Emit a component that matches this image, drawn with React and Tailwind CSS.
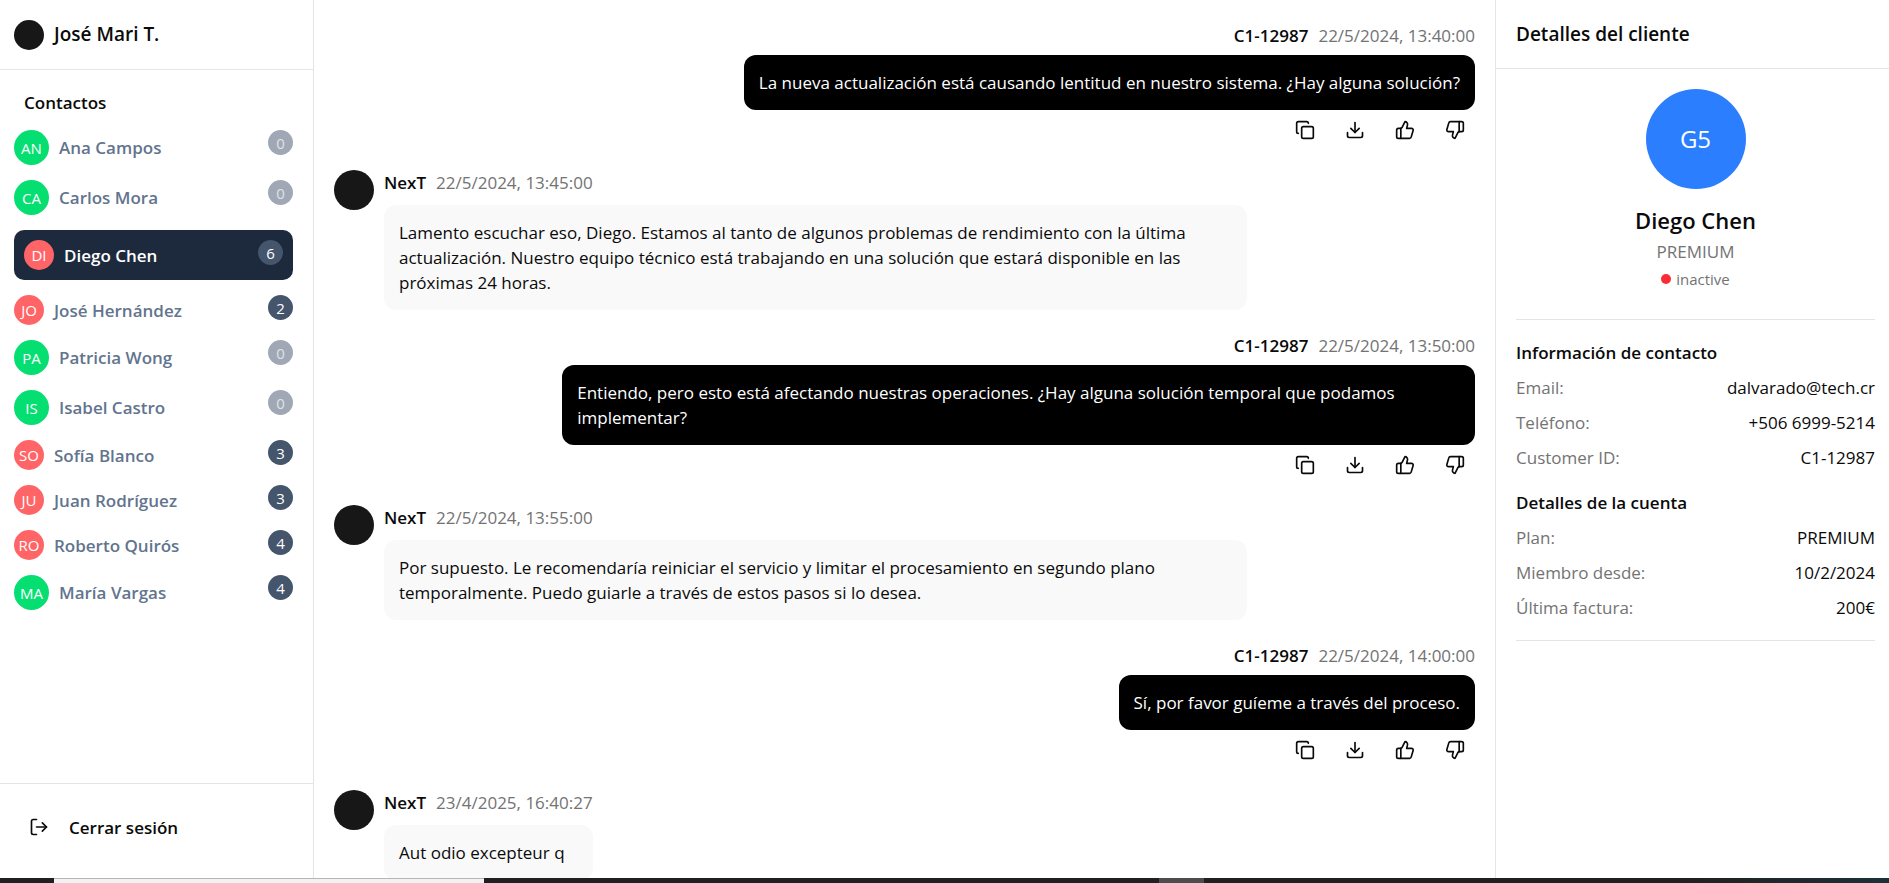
import { Copy, Download, ThumbsUp, ThumbsDown, LogOut } from 'lucide-react'

const contacts = [
  { name: 'Ana Campos', count: 0, online: true },
  { name: 'Carlos Mora', count: 0, online: true },
  { name: 'Diego Chen', count: 6, online: false, selected: true },
  { name: 'José Hernández', count: 2, online: false },
  { name: 'Patricia Wong', count: 0, online: true },
  { name: 'Isabel Castro', count: 0, online: true },
  { name: 'Sofía Blanco', count: 3, online: false },
  { name: 'Juan Rodríguez', count: 3, online: false },
  { name: 'Roberto Quirós', count: 4, online: false },
  { name: 'María Vargas', count: 4, online: true },
]

const messages = [
  { from: 'user', time: '22/5/2024, 13:40:00', text: 'La nueva actualización está causando lentitud en nuestro sistema. ¿Hay alguna solución?' },
  { from: 'bot', time: '22/5/2024, 13:45:00', text: 'Lamento escuchar eso, Diego. Estamos al tanto de algunos problemas de rendimiento con la última actualización. Nuestro equipo técnico está trabajando en una solución que estará disponible en las próximas 24 horas.' },
  { from: 'user', time: '22/5/2024, 13:50:00', text: 'Entiendo, pero esto está afectando nuestras operaciones. ¿Hay alguna solución temporal que podamos implementar?' },
  { from: 'bot', time: '22/5/2024, 13:55:00', text: 'Por supuesto. Le recomendaría reiniciar el servicio y limitar el procesamiento en segundo plano temporalmente. Puedo guiarle a través de estos pasos si lo desea.' },
  { from: 'user', time: '22/5/2024, 14:00:00', text: 'Sí, por favor guíeme a través del proceso.' },
  { from: 'bot', time: '23/4/2025, 16:40:27', text: 'Aut odio excepteur q' },
]

const actions = [
  { label: 'Copiar', Icon: Copy },
  { label: 'Descargar', Icon: Download },
  { label: 'Me gusta', Icon: ThumbsUp },
  { label: 'No me gusta', Icon: ThumbsDown },
]

function Contact({ name, count, online, selected }) {
  return (
    <li>
      <button
        type="button"
        className={`flex w-full items-center text-left ${selected ? 'rounded-[10px] bg-[#1d293d] p-[10px] text-white' : 'text-[#62748e]'}`}
      >
        <span
          className={`flex shrink-0 items-center justify-center rounded-full text-[15px] leading-5 text-white ${online ? 'size-[35px] bg-[#05df72]' : 'size-[30px] bg-[#ff6467]'}`}
        >
          {name.slice(0, 2).toUpperCase()}
        </span>
        <span className="ml-[10px] flex-1 text-[17px] leading-[25px] font-semibold">{name}</span>
        <span
          className={`flex size-[25px] items-center justify-center self-start rounded-full text-[15px] leading-5 ${count ? 'bg-[#45556c] text-white' : 'bg-[#a1a8b5] text-[#dfe2e7]'}`}
        >
          {count}
        </span>
      </button>
    </li>
  )
}

function UserMessage({ time, text }) {
  return (
    <article className="flex max-w-4/5 flex-col items-end self-end">
      <header className="mb-[5px] flex h-[30px] items-center gap-[10px]">
        <span className="font-semibold">C1-12987</span>
        <time className="text-[#737373]">{time}</time>
      </header>
      <p className="rounded-xl bg-black p-[15px] text-white">{text}</p>
      <div className="flex gap-[10px]">
        {actions.map(({ label, Icon }) => (
          <button key={label} type="button" aria-label={label} className="flex size-10 items-center justify-center">
            <Icon size={20} strokeWidth={2} />
          </button>
        ))}
      </div>
    </article>
  )
}

function BotMessage({ time, text }) {
  return (
    <article className="flex max-w-4/5 gap-[10px] self-start">
      <div className="size-10 shrink-0 rounded-full bg-[#171717]" />
      <div className="flex flex-col items-start">
        <header className="mb-[10px] flex gap-[10px]">
          <span className="font-semibold">NexT</span>
          <time className="text-[#737373]">{time}</time>
        </header>
        <p className="min-w-full rounded-xl bg-[#f9f9f9] p-[15px]">{text}</p>
      </div>
    </article>
  )
}

function DetailSection({ title, rows }) {
  return (
    <section>
      <h3 className="mb-[10px] font-semibold">{title}</h3>
      <dl className="flex flex-col gap-[10px]">
        {rows.map(([label, value]) => (
          <div key={label} className="flex justify-between">
            <dt className="text-[#737373]">{label}</dt>
            <dd>{value}</dd>
          </div>
        ))}
      </dl>
    </section>
  )
}

export default function App() {
  return (
    <div className="flex h-screen flex-col bg-white font-['Open_Sans',sans-serif] text-[17px] leading-[25px] text-[#0a0a0a]">
      <div className="flex min-h-0 flex-1">
        <aside className="flex w-[314px] shrink-0 flex-col border-r border-[#e5e5e5]">
          <header className="flex h-[70px] items-center gap-[10px] border-b border-[#e5e5e5] px-[14px]">
            <div className="size-[30px] rounded-full bg-[#171717]" />
            <h1 className="text-[19px] font-semibold">José Mari T.</h1>
          </header>
          <nav aria-labelledby="contacts-title" className="flex-1 overflow-hidden py-5 pr-5 pl-[14px]">
            <h2 id="contacts-title" className="mb-[15px] px-[10px] font-semibold">Contactos</h2>
            <ul className="flex flex-col gap-[15px]">
              {contacts.map((c) => (
                <Contact key={c.name} {...c} />
              ))}
            </ul>
          </nav>
          <footer className="border-t border-[#e5e5e5] px-[14px] pt-5 pb-7">
            <button type="button" className="flex h-[46px] w-full items-center gap-5 px-[15px] font-semibold">
              <LogOut size={20} strokeWidth={2} />
              Cerrar sesión
            </button>
          </footer>
        </aside>

        <main className="flex min-w-0 flex-1 flex-col gap-5 overflow-hidden p-5">
          {messages.map((m) => (m.from === 'user' ? <UserMessage key={m.time} {...m} /> : <BotMessage key={m.time} {...m} />))}
        </main>

        <aside className="w-[394px] shrink-0 border-l border-[#e5e5e5]">
          <header className="flex h-[69px] items-center border-b border-[#e5e5e5] px-5">
            <h2 className="text-[19px] font-semibold">Detalles del cliente</h2>
          </header>
          <div className="py-5 pr-[14px] pl-5">
            <div className="flex flex-col items-center border-b border-[#e5e5e5] pb-[30px]">
              <div className="flex size-[100px] items-center justify-center rounded-full bg-[#2b7fff] text-2xl text-white">G5</div>
              <h3 className="mt-[18px] text-[22px] leading-[27px] font-semibold">Diego Chen</h3>
              <p className="mt-[5px] text-[#737373]">PREMIUM</p>
              <p className="mt-[5px] flex items-center gap-[5px] text-[15px] leading-5 text-[#737373]">
                <span className="size-[10px] rounded-full bg-[#fb2c36]" />
                inactive
              </p>
            </div>
            <div className="flex flex-col gap-5 border-b border-[#e5e5e5] py-5">
              <DetailSection
                title="Información de contacto"
                rows={[['Email:', 'dalvarado@tech.cr'], ['Teléfono:', '+506 6999-5214'], ['Customer ID:', 'C1-12987']]}
              />
              <DetailSection
                title="Detalles de la cuenta"
                rows={[['Plan:', 'PREMIUM'], ['Miembro desde:', '10/2/2024'], ['Última factura:', '200€']]}
              />
            </div>
          </div>
        </aside>
      </div>
      <div className="flex h-[5px] shrink-0 bg-[#202023]">
        <div className="w-[54px]" />
        <div className="w-[430px] border-t border-[#b5b5b5] bg-[#f2f2f2]" />
        <div className="w-[675px]" />
        <div className="w-[45px] bg-[#4d4d4d]" />
        <div className="flex-1 bg-linear-to-r from-[#202020] from-70% to-[#1c3038]" />
      </div>
    </div>
  )
}
